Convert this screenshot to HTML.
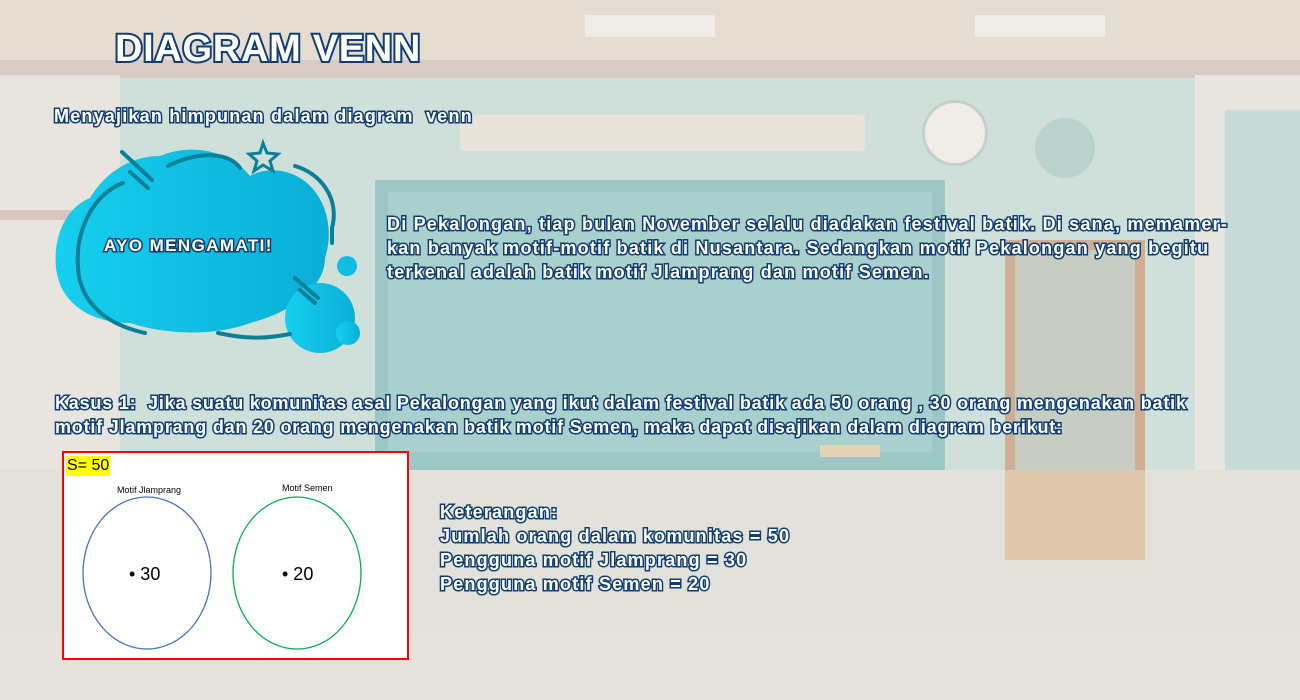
<!DOCTYPE html>
<html><head><meta charset="utf-8"><style>
body{margin:0;width:1300px;height:700px;overflow:hidden;position:relative;background:#dcdfd6;font-family:"Liberation Sans",sans-serif}
.a{position:absolute}
.t{position:absolute;color:#fff;font-weight:bold;-webkit-text-stroke:3px #0f3d73;paint-order:stroke fill;white-space:nowrap;letter-spacing:1.2px;font-size:18px}
</style></head><body>
<div class="a" style="left:0;top:0;width:1300px;height:70px;background:#e6ddd2"></div>
<div class="a" style="left:585px;top:15px;width:130px;height:22px;background:#efece6"></div>
<div class="a" style="left:975px;top:15px;width:130px;height:22px;background:#efece6"></div>
<div class="a" style="left:0;top:70px;width:1300px;height:400px;background:#cfe0da"></div>
<div class="a" style="left:0;top:60px;width:1300px;height:18px;background:#d8cbc4"></div>
<div class="a" style="left:0;top:75px;width:120px;height:560px;background:#e8e4e0"></div>
<div class="a" style="left:0;top:210px;width:120px;height:10px;background:#d9c7c0"></div>
<div class="a" style="left:1195px;top:75px;width:105px;height:520px;background:#e9e6e2"></div>
<div class="a" style="left:1225px;top:110px;width:75px;height:480px;background:#c7dcd9"></div>
<div class="a" style="left:460px;top:115px;width:405px;height:36px;background:#e9e3dc;border-radius:4px"></div>
<div class="a" style="left:375px;top:180px;width:570px;height:290px;background:#9cc7c4"></div>
<div class="a" style="left:388px;top:192px;width:544px;height:260px;background:#a9d0cc"></div>
<div class="a" style="left:922px;top:100px;width:60px;height:60px;border-radius:50%;background:#f0ede8;border:3px solid #c6cfcb"></div>
<div class="a" style="left:1035px;top:118px;width:60px;height:60px;border-radius:50%;background:#bcd3cd"></div>
<div class="a" style="left:1005px;top:240px;width:140px;height:320px;background:#cfae95"></div>
<div class="a" style="left:1015px;top:250px;width:120px;height:220px;background:#c7cdc2"></div>
<div class="a" style="left:0;top:470px;width:1300px;height:230px;background:#e2e1dc"></div>
<div class="a" style="left:1005px;top:470px;width:140px;height:90px;background:#dfc7ac"></div>
<div class="a" style="left:820px;top:445px;width:60px;height:12px;background:#e6d2b4"></div>
<div class="a" style="left:0;top:630px;width:1300px;height:70px;background:#e6e3de"></div>

<svg class="a" style="left:50px;top:138px" width="320" height="220" viewBox="0 0 320 220">
<defs><linearGradient id="g" x1="0" x2="1"><stop offset="0" stop-color="#16cfee"/><stop offset="1" stop-color="#0aaed6"/></linearGradient></defs>
<path d="M40 60 C15 70 3 100 6 130 C10 165 40 185 80 185 C110 195 160 200 200 185 C240 175 275 150 275 120 C285 90 275 55 250 40 C230 28 210 32 200 38 C180 12 140 5 110 18 C80 18 55 35 40 60Z" fill="url(#g)"/>
<circle cx="270" cy="180" r="35" fill="url(#g)"/>
<circle cx="298" cy="195" r="12" fill="url(#g)"/>
<circle cx="297" cy="128" r="10" fill="#12bde2"/>
<path d="M73 45 C45 55 25 90 28 130 C30 160 50 185 95 195" fill="none" stroke="#0a7f98" stroke-width="4" stroke-linecap="round"/>
<path d="M168 195 C200 202 220 200 240 196" fill="none" stroke="#0a7f98" stroke-width="4" stroke-linecap="round"/>
<path d="M118 28 C150 12 180 15 190 30" fill="none" stroke="#0a7f98" stroke-width="4" stroke-linecap="round"/>
<path d="M245 28 C270 35 290 60 282 90 L282 105" fill="none" stroke="#0a7f98" stroke-width="4" stroke-linecap="round"/>
<path d="M72 14 L102 42 M80 34 L98 50" stroke="#0a7f98" stroke-width="4" stroke-linecap="round"/>
<path d="M245 140 L268 160 M250 152 L265 165" stroke="#0a7f98" stroke-width="4" stroke-linecap="round"/>
<path d="M213 5 L217 15 L228 16 L220 23 L223 33 L213 27 L204 33 L207 23 L199 16 L210 15Z" fill="none" stroke="#0a7f98" stroke-width="3"/>
</svg>

<div class="t" style="left:115px;top:28px;font-size:38px;letter-spacing:0.7px;-webkit-text-stroke:4px #0f3d73">DIAGRAM VENN</div>
<div class="t" style="left:54px;top:106px">Menyajikan himpunan dalam diagram&nbsp; venn</div>
<div class="t" style="left:104px;top:236px;font-size:17px;letter-spacing:1.4px">AYO MENGAMATI!</div>
<div class="t" style="left:387px;top:212px;line-height:24px">Di Pekalongan, tiap bulan November selalu diadakan festival batik. Di sana, memamer-<br>kan banyak motif-motif batik di Nusantara. Sedangkan motif Pekalongan yang begitu<br>terkenal adalah batik motif Jlamprang dan motif Semen.</div>
<div class="t" style="left:55px;top:391px;line-height:24px;letter-spacing:0.8px">Kasus 1:&nbsp; Jika suatu komunitas asal Pekalongan yang ikut dalam festival batik ada 50 orang , 30 orang mengenakan batik<br>motif Jlamprang dan 20 orang mengenakan batik motif Semen, maka dapat disajikan dalam diagram berikut:</div>
<div class="t" style="left:440px;top:500px;line-height:24px">Keterangan:<br>Jumlah orang dalam komunitas = 50<br>Pengguna motif Jlamprang = 30<br>Pengguna motif Semen = 20</div>

<div class="a" style="left:62px;top:451px;width:343px;height:205px;background:#fff;border:2px solid #f00"></div>
<div class="a" style="left:66px;top:456px;background:#ff0;font-size:16px;line-height:20px;padding:0 1px">S= 50</div>
<div class="a" style="left:117px;top:485px;font-size:9px">Motif Jlamprang</div>
<div class="a" style="left:282px;top:483px;font-size:9px">Motif Semen</div>
<svg class="a" style="left:62px;top:451px" width="347" height="209">
<ellipse cx="85" cy="122" rx="64" ry="76" fill="none" stroke="#4472c4" stroke-width="1.3"/>
<ellipse cx="235" cy="122" rx="64" ry="76" fill="none" stroke="#00b050" stroke-width="1.3"/>
</svg>
<div class="a" style="left:129px;top:564px;font-size:18px">• 30</div>
<div class="a" style="left:282px;top:564px;font-size:18px">• 20</div>
</body></html>
